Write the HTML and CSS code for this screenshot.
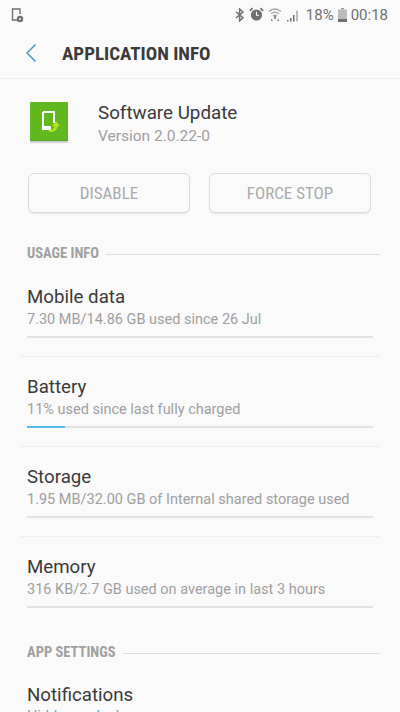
FILE: index.html
```html
<!DOCTYPE html>
<html lang="en">
<head>
<meta charset="utf-8">
<title>Application info</title>
<link rel="stylesheet" href="styles.css">
</head>
<body>
<div class="screen">
  <div class="status">
    <svg class="ic-left" width="16" height="16" viewBox="0 0 16 16"><path d="M8 13H2.500V2h7.500v5" fill="none" stroke="#707070" stroke-width="1.400"/><circle cx="10" cy="12" r="3.200" fill="#707070"/><circle cx="10" cy="12" r="1" fill="#fafafa"/></svg>
    <div class="status-right">
      <svg width="10" height="14" viewBox="0 0 10 14"><path d="M1 3.800l7 6-3.400 3V1l3.400 3-7 6" fill="none" stroke="#707070" stroke-width="1.500"/></svg>
      <svg width="15" height="15" viewBox="0 0 15 15"><circle cx="7.500" cy="8" r="5.600" fill="#707070"/><path d="M7.500 4.800V8.300h2.500" fill="none" stroke="#fafafa" stroke-width="1.100"/><path d="M.8 3.800L3.600 1.200M14.200 3.800L11.400 1.200" stroke="#707070" stroke-width="1.800"/></svg>
      <svg class="wifi" width="14" height="15" viewBox="0 0 14 15"><path d="M1 4.500Q7-.5 13 4.500M3 6.800Q7 3.500 11 6.800M5 9Q7 7.500 9 9" fill="none" stroke="#a0a0a0" stroke-width="1.300"/><path d="M7 9v3" stroke="#777" stroke-width="1.600"/><path d="M2.800 14l1-2.500 1 2.500zM9.200 14l1-2.500 1 2.500z" fill="#707070"/></svg>
      <svg class="sig" width="14" height="14" viewBox="0 0 14 14"><path d="M1 12h1.500v1.500H1zM4 10h1.500v3.500H4zM7 7h1.500v6.500H7z" fill="#707070"/><path d="M10 2.500h2v11h-2z" fill="#bbb"/></svg>
      <span class="pct">18%</span>
      <svg class="bat" width="9" height="14" viewBox="0 0 9 14"><path d="M3 0h3v1.500H3z" fill="#999"/><path d="M0 1.500h9V14H0z" fill="#bbb"/><path d="M0 11h9v3H0z" fill="#707070"/></svg>
      <span class="time">00:18</span>
    </div>
  </div>
  <header class="appbar">
    <svg class="back" width="12" height="20" viewBox="0 0 12 20"><path d="M10.500 1.500L2 10l8.500 8.500" fill="none" stroke="#4a9fc4" stroke-width="1.600"/></svg>
    <h1 class="title">APPLICATION INFO</h1>
  </header>
  <section class="app">
    <div class="app-icon">
      <svg width="38" height="38" viewBox="0 0 38 38"><path d="M13 10h11v11M13 10v17h7" fill="none" stroke="#fff" stroke-width="2"/><path d="M12 24h9v4h-9z" fill="#fff"/><path d="M19 28c4 0 5-1 5.500-4H22l4-4.500 4 4.500h-2.500c-.5 4-3 6-8.500 6z" fill="#b5e61d"/></svg>
    </div>
    <div class="app-text">
      <div class="app-name">Software Update</div>
      <div class="app-ver">Version 2.0.22-0</div>
    </div>
  </section>
  <div class="buttons">
    <button class="btn">DISABLE</button>
    <button class="btn">FORCE STOP</button>
  </div>
  <div class="section-head"><span>USAGE INFO</span><i></i></div>
  <div class="row">
    <div class="row-title">Mobile data</div>
    <div class="row-sub">7.30 MB/14.86 GB used since 26 Jul</div>
    <div class="bar"></div>
  </div>
  <div class="row">
    <div class="row-title">Battery</div>
    <div class="row-sub">11% used since last fully charged</div>
    <div class="bar"><div class="fill" style="width:11%"></div></div>
  </div>
  <div class="row">
    <div class="row-title">Storage</div>
    <div class="row-sub">1.95 MB/32.00 GB of Internal shared storage used</div>
    <div class="bar"></div>
  </div>
  <div class="row last">
    <div class="row-title">Memory</div>
    <div class="row-sub">316 KB/2.7 GB used on average in last 3 hours</div>
    <div class="bar"></div>
  </div>
  <div class="section-head second"><span>APP SETTINGS</span><i></i></div>
  <div class="row">
    <div class="row-title">Notifications</div>
    <div class="row-sub blue">Hidden on lock screen</div>
  </div>
</div>
</body>
</html>
```

FILE: styles.css
```css
html, body { margin: 0; padding: 0; }
body { width: 400px; height: 712px; overflow: hidden; background: #fafafa; font-family: Roboto, sans-serif; }
.screen { width: 400px; height: 712px; overflow: hidden; background: #fafafa; }
.status { height: 29px; display: flex; align-items: center; justify-content: space-between; padding: 0 12px 0 10px; box-sizing: border-box; color: #707070; }
.status-right { display: flex; align-items: center; gap: 4px; }
.pct, .time { font-size: 15px; color: #707070; }
.pct { margin-left: 2px; }
.appbar { height: 50px; display: flex; align-items: center; box-sizing: border-box; border-bottom: 1px solid #eee; padding-bottom: 1px; }
.back { margin-left: 25px; flex: none; }
.title { margin: 0 0 0 25px; font-size: 19px; font-weight: 700; color: #3a3a3a; font-stretch: condensed; white-space: nowrap; }
.app { display: flex; padding: 23px 0 0 30px; height: 94px; box-sizing: border-box; }
.app-icon { width: 38px; height: 38px; background: #62b81f; border-radius: 1px; border-bottom: 1px solid #56a31b; box-shadow: 0 2px 1px #cfcfcf; flex: none; }
.app-icon svg { display: block; }
.app-text { margin-left: 30px; margin-top: -1px; }
.app-name { font-size: 18.8px; line-height: 24px; color: #3a3a3a; }
.app-ver { font-size: 15.5px; line-height: 22px; color: #a0a0a0; }
.buttons { display: flex; gap: 19px; padding: 0 29px 0 28px; }
.btn { flex: 1; height: 40px; padding: 0; background: #fafafa; border: 1px solid #dcdcdc; border-radius: 6px; box-shadow: 0 1px 1px #e4e4e4; font: 400 17px Roboto, sans-serif; font-stretch: condensed; color: #aaa; }
.section-head { display: flex; align-items: center; gap: 7px; margin: 33px 20px 5px 27px; font-size: 14.5px; font-weight: 700; font-stretch: condensed; color: #a0a0a0; line-height: 16px; }
.section-head i { flex: 1; height: 1px; background: #ddd; }
.section-head.second { margin-top: 37px; margin-bottom: 4px; }
.row { height: 90px; margin: 0 20px; padding: 18px 7px 0; box-sizing: border-box; border-bottom: 1px solid #f0f0f0; }
.row.last { border-bottom: 0; height: 71px; }
.row-title { font-size: 18.7px; line-height: 25px; color: #3a3a3a; }
.row-sub { font-size: 14.5px; line-height: 20px; color: #a0a0a0; }
.row-sub.blue { color: #5aa8cc; line-height: 18px; }
.bar { height: 2px; margin-top: 6px; background: #e2e2e2; }
.fill { height: 2px; background: #55bdec; }
```
